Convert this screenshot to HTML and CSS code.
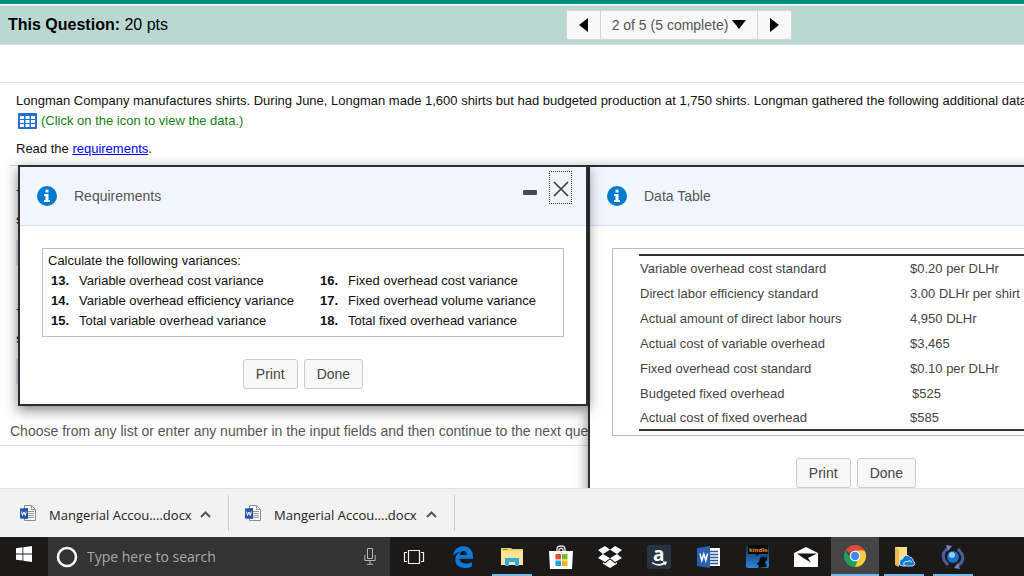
FILE: index.html
```
<!DOCTYPE html>
<html lang="en">
  <head>
    <meta charset="utf-8">
    <title>This Question</title>
    <link rel="stylesheet" href="styles.css">
  </head>
  <body>
    <main class="page">
      <header class="question-bar">
        <h1><strong>This Question:</strong> 20 pts</h1>
        <nav class="pager">
          <button aria-label="Previous question"><svg width="9" height="14" viewBox="0 0 9 14"><path d="M9 0v14L0 7z"/></svg></button>
          <button class="current">2 of 5 (5 complete) <svg width="14" height="9" viewBox="0 0 14 9"><path d="M0 0h14L7 9z"/></svg></button>
          <button aria-label="Next question"><svg width="9" height="14" viewBox="0 0 9 14"><path d="M0 0v14l9-7z"/></svg></button>
        </nav>
      </header>
      <section class="question">
        <p class="intro">Longman Company manufactures shirts. During June, Longman made 1,600 shirts but had budgeted production at 1,750 shirts. Longman gathered the following additional data:</p>
        <p class="view-data">
          <svg width="19" height="16" viewBox="0 0 19 16"><rect width="19" height="16" rx="1" fill="#1f6fd0"/><path fill="#fff" d="M2 3h4v3H2zM7.500 3h4v3h-4zM13 3h4v3h-4zM2 7h4v3H2zM7.500 7h4v3h-4zM13 7h4v3h-4zM2 11h4v3H2zM7.500 11h4v3h-4zM13 11h4v3h-4z"/></svg>
          (Click on the icon to view the data.)
        </p>
        <p class="read">Read the <a href="#requirements">requirements</a>.</p>
      </section>
      <section class="answers">
        <div class="answer"><p>-</p><p>s</p><div class="field"></div></div>
        <div class="answer"><p>-</p><p>s</p><div class="field"></div></div>
      </section>
      <p class="hint">Choose from any list or enter any number in the input fields and then continue to the next question.</p>

      <div class="dialogs">
        <section class="dialog front" id="requirements">
          <header>
            <svg class="info" width="20" height="20" viewBox="0 0 20 20"><circle cx="10" cy="10" r="10" fill="#0079d1"/><path fill="#fff" d="M8.500 3.500h3v3h-3zM7 8h4.500v6H13v2H7v-2h1.500v-4H7z"/></svg>
            <h2>Requirements</h2>
            <button class="minimize" aria-label="Minimize"><svg width="14" height="5" viewBox="0 0 14 5"><rect width="14" height="5" rx="1" fill="#4a4a4a"/></svg></button>
            <button class="close" aria-label="Close"><svg width="16" height="16" viewBox="0 0 16 16"><path d="M1 1l14 14M15 1L1 15" stroke="#3c3c3c" stroke-width="1.600"/></svg></button>
          </header>
          <div class="box variances">
            <p>Calculate the following variances:</p>
            <div class="lists">
              <ol start="13">
                <li><b>13.</b>Variable overhead cost variance</li>
                <li><b>14.</b>Variable overhead efficiency variance</li>
                <li><b>15.</b>Total variable overhead variance</li>
              </ol>
              <ol start="16">
                <li><b>16.</b>Fixed overhead cost variance</li>
                <li><b>17.</b>Fixed overhead volume variance</li>
                <li><b>18.</b>Total fixed overhead variance</li>
              </ol>
            </div>
          </div>
          <div class="actions"><button>Print</button><button>Done</button></div>
        </section>

        <section class="dialog" id="data-table">
          <header>
            <svg class="info" width="20" height="20" viewBox="0 0 20 20"><circle cx="10" cy="10" r="10" fill="#0079d1"/><path fill="#fff" d="M8.500 3.500h3v3h-3zM7 8h4.500v6H13v2H7v-2h1.500v-4H7z"/></svg>
            <h2>Data Table</h2>
          </header>
          <div class="box data">
            <table>
              <tr><td>Variable overhead cost standard</td><td>$0.20 per DLHr</td></tr>
              <tr><td>Direct labor efficiency standard</td><td>3.00 DLHr per shirt</td></tr>
              <tr><td>Actual amount of direct labor hours</td><td>4,950 DLHr</td></tr>
              <tr><td>Actual cost of variable overhead</td><td>$3,465</td></tr>
              <tr><td>Fixed overhead cost standard</td><td>$0.10 per DLHr</td></tr>
              <tr><td>Budgeted fixed overhead</td><td class="shift">$525</td></tr>
              <tr><td>Actual cost of fixed overhead</td><td>$585</td></tr>
            </table>
          </div>
          <div class="actions"><button>Print</button><button>Done</button></div>
        </section>
      </div>
    </main>

    <svg class="defs" width="0" height="0">
      <symbol id="docx" viewBox="0 0 17 17">
        <path d="M4.500.5h7l4 4v11h-11z" fill="#fafafa" stroke="#8c8c8c"/>
        <path d="M11.500.5v4h4M8 6.500h6M8 8.500h6M8 10.500h6M8 12.500h6" fill="none" stroke="#9a9a9a"/>
        <path d="M0 3.500L8 3v11l-8-.500z" fill="#2457a5"/>
        <path d="M1.500 6.500l1 4 1.400-3.500 1.400 3.500 1-4" fill="none" stroke="#fff"/>
      </symbol>
    </svg>
    <footer class="downloads">
      <div class="download">
        <svg width="17" height="17"><use href="#docx"/></svg>
        <span>Mangerial Accou....docx</span>
        <button aria-label="Download options"><svg width="11" height="7" viewBox="0 0 11 7"><path d="M1 6l4.500-4.500L10 6" fill="none" stroke="#555" stroke-width="2"/></svg></button>
      </div>
      <div class="download">
        <svg width="17" height="17"><use href="#docx"/></svg>
        <span>Mangerial Accou....docx</span>
        <button aria-label="Download options"><svg width="11" height="7" viewBox="0 0 11 7"><path d="M1 6l4.500-4.500L10 6" fill="none" stroke="#555" stroke-width="2"/></svg></button>
      </div>
    </footer>

    <footer class="taskbar">
      <button class="start" aria-label="Start"><svg width="16" height="16" viewBox="0 0 16 16"><path fill="#fff" d="M0 2.200L6.500 1.300v6.200H0zM7.300 1.200L16 0v7.500H7.300zM0 8.400h6.500v6.200L0 13.700zM7.300 8.400H16V16l-8.700-1.200z"/></svg></button>
      <div class="search">
        <svg width="22" height="22" viewBox="0 0 22 22"><circle cx="11" cy="11" r="9" fill="none" stroke="#f4f4f4" stroke-width="2.600"/></svg>
        <input type="text" placeholder="Type here to search" aria-label="Search">
        <svg width="12" height="17" viewBox="0 0 12 17"><path d="M3.500.5h5v10h-5zM.8 7v5.500h10.400V7M6 12.500V16M3 16.300h6" fill="none" stroke="#b5b5b5"/></svg>
      </div>
      <button class="app" aria-label="Task view"><svg width="22" height="16" viewBox="0 0 22 16"><path d="M5.500 1.500h11v13h-11zM4 3.500H1.500v9H4M18 3.500h2.500v9H18" fill="none" stroke="#f0f0f0" stroke-width="1.200"/></svg></button>
      <button class="app" aria-label="Edge"><svg width="20" height="22" viewBox="0 0 20 22"><path fill="#0b7ada" d="M0 9.500C.9 4 4.700.3 10.200.3 16.500.3 20 5 20 10.500v2.300H6.600c.2 3.400 3 4.900 6.300 4.900 2.200 0 4.200-.7 5.900-1.700v4.500c-2 1-4.400 1.500-7 1.500C6 22 2.300 18.600 2.300 13.800c0-3.600 1.800-6.300 5-8C4.400 6.200 1.800 7.600 0 9.500zM6.700 9h7.200c0-2.400-1.100-4-3.500-4-2.200 0-3.500 1.700-3.700 4z"/></svg></button>
      <button class="app open" aria-label="File Explorer"><svg width="22" height="18" viewBox="0 0 22 18"><path fill="#f3cf6c" d="M0 0h10l1 1h11v5H0z"/><path fill="#fbe39a" d="M0 3h22v14H0z"/><path fill="#35a9dc" d="M4 18v-8h14v8h-4v-4H8v4z"/><path fill="#4aa84a" d="M2 1h4v1H2z"/></svg></button>
      <button class="app" aria-label="Store"><svg width="24" height="24" viewBox="0 0 24 24"><path fill="none" stroke="#ddd" stroke-width="1.400" d="M8 7V4q0-3 4-3t4 3v3M10 7V4.500Q12 2 14 4.500V7"/><path fill="#fff" d="M0 6h24l-1 18H1z"/><path fill="#e8502e" d="M6.500 9H12v5.500H6.500z"/><path fill="#7dba1c" d="M13 9h5.500v5.500H13z"/><path fill="#18a0e0" d="M6.500 15.500H12V21H6.500z"/><path fill="#f9b512" d="M13 15.500h5.500V21H13z"/></svg></button>
      <button class="app" aria-label="Dropbox"><svg width="24" height="22" viewBox="0 0 24 22"><path fill="#fff" d="M7 0l5 3.700L5 8 0 4zM17 0l7 4-5 4-7-4.300zM0 12l5-4 7 4.300L7 16zM24 12l-5-4-7 4.300 5 3.700zM12 13.500l5 4 2-1.300v1.500L12 22l-7-4.300v-1.500l2 1.300z"/></svg></button>
      <button class="app" aria-label="Amazon"><svg width="24" height="24" viewBox="0 0 24 24"><rect width="24" height="24" rx="2" fill="#27333f"/><text x="6" y="16" class="amazon-a">a</text><path d="M5 17.500q6.500 4.500 13 .5M16 17l3 .3-1 2.700" fill="none" stroke="#fff" stroke-width="1.500"/></svg></button>
      <button class="app" aria-label="Word"><svg width="23" height="22" viewBox="0 0 23 22"><path fill="#fff" d="M12 2h11v18H12z"/><path d="M13 5.500h8M13 8.500h8M13 11.500h8M13 14.500h8M13 17.500h8" stroke="#2b579a" stroke-width="1.300"/><path fill="#2b60b0" d="M0 2l13-2v22L0 20z"/><path d="M3 7.500l1.800 7 2-6.500 2 6.500 1.800-7" fill="none" stroke="#fff" stroke-width="1.500"/></svg></button>
      <button class="app" aria-label="Kindle"><svg width="23" height="23" viewBox="0 0 23 23"><defs><linearGradient id="sky" x2="0" y2="1"><stop offset="0" stop-color="#0a2d56"/><stop offset="1" stop-color="#2c86d8"/></linearGradient></defs><rect width="23" height="23" rx="2" fill="url(#sky)"/><path fill="#0b0b0d" d="M2 0h20v9h-9l-2 2-1-2H2zM14 13l3-2 2 2 2-2v4l-2 2 2 5-9 1 1-3-3-1 3-2z"/><text x="3" y="7" class="kindle-name">kindle</text></svg></button>
      <button class="app" aria-label="Mail"><svg width="24" height="20" viewBox="0 0 24 20"><path fill="#fff" d="M0 6L12 0l12 6v14H0z"/><path fill="#141414" d="M3 6.500h20l-9 4.500 3 4.500L10 11.500z"/></svg></button>
      <button class="app open active" aria-label="Chrome"><svg width="22" height="22" viewBox="0 0 22 22"><path fill="#de4a3c" d="M11 11L1.470 5.500A11 11 0 0 1 20.530 5.500z"/><path fill="#fccd3f" d="M11 11V5.500h9.530A11 11 0 0 1 11 22z"/><path fill="#1ca15f" d="M1.470 5.500L6.500 13.500 11 16l2.500-.2L11 22A11 11 0 0 1 1.470 5.500z"/><circle cx="11" cy="11" r="5.300" fill="#fff"/><circle cx="11" cy="11" r="4.200" fill="#4285f4"/></svg></button>
      <button class="app open" aria-label="OneDrive folder"><svg width="21" height="20" viewBox="0 0 21 20"><path fill="#fbe08c" d="M1 0h12v18H1z"/><path fill="#e6bb56" d="M1 0l4 3v17l-4-2z"/><path fill="#0a78d4" stroke="#fff" stroke-width=".8" d="M9 19a3.500 3.500 0 0 1-.5-7 4 4 0 0 1 7.500-1.500 3 3 0 0 1 3 3.500 2.600 2.600 0 0 1-.5 5z"/><path d="M10.500 18.500c-2-3 1-5 3-3.500 1-2 4-1.500 4 .5" fill="none" stroke="#fff"/></svg></button>
      <button class="app open" aria-label="Sync"><svg width="24" height="24" viewBox="0 0 24 24"><circle cx="12" cy="12" r="6" fill="#1b6fc4"/><circle cx="11" cy="10" r="3" fill="#8fd0fa"/><path d="M8 3Q0 7 3 15l4 5M16 21q8-4 5-12l-4-5" fill="none" stroke="#4a5d9c" stroke-width="3"/><path fill="#7484bc" d="M5 0l6 1-4 5zM19 24l-6-1 4-5z"/></svg></button>
    </footer>
  </body>
</html>
```
FILE: styles.css
```
* {
  box-sizing: border-box;
}
html, body {
  height: 100%;
  margin: 0;
}
body {
  display: flex;
  flex-direction: column;
  overflow: hidden;
  background: #fff;
  color: #111;
  font: 13px/20px "Liberation Sans", Arial, sans-serif;
}
p, h1, h2, ol {
  margin: 0;
  padding: 0;
}
button {
  font: inherit;
  padding: 0;
  border: 0;
  background: none;
  cursor: pointer;
}
svg {
  flex: none;
  overflow: visible;
}
.defs {
  position: absolute;
}

.page {
  position: relative;
  flex: 1;
  min-height: 0;
  overflow: hidden;
  border-top: 4px solid #009080;
}
.question-bar {
  display: flex;
  align-items: center;
  height: 40px;
  margin-top: 1px;
  padding: 0 8px 1px;
  border-top: 1px solid #e4e8ee;
  border-bottom: 1px solid #d5dbe0;
  background: #b9d8d2;
}
.question-bar h1 {
  width: 558px;
  font-size: 16px;
  font-weight: normal;
  color: #000;
}
.pager {
  display: flex;
  border: 1px solid #d4d4d4;
  border-radius: 2px;
  background: #f8f8f8;
}
.pager button {
  display: flex;
  align-items: center;
  justify-content: center;
  gap: 4px;
  width: 33px;
  height: 28px;
}
.pager .current {
  width: 158px;
  border: 1px solid #d4d4d4;
  border-width: 0 1px;
  color: #555;
  font-size: 14px;
}

.question {
  margin-top: 37px;
  padding: 8px 16px 6px;
  border-top: 1px solid #dde2ea;
}
.intro {
  white-space: nowrap;
}
.view-data {
  display: flex;
  align-items: center;
  gap: 4px;
  padding-left: 2px;
  color: #128012;
}
.read {
  margin-top: 8px;
}
.read a {
  color: #00f;
}
.answers {
  height: 252px;
  margin-left: 10px;
  padding: 14px 6px;
  border-top: 1px solid #cdd5e3;
}
.answer {
  height: 119px;
}
.answer p {
  height: 30px;
}
.field {
  width: 80px;
  height: 25px;
  background: #dfe3ea;
}
.hint {
  padding: 4px 10px;
  border-bottom: 1px solid #d5dbe6;
  color: #555;
  font-size: 14px;
  white-space: nowrap;
}

.dialogs {
  position: absolute;
  top: 161px;
  left: 18px;
  display: flex;
  align-items: flex-start;
}
.dialog {
  flex: none;
  width: 536px;
  min-height: 340px;
  border: 2px solid #2b2f30;
  background: #fff;
  box-shadow: 0 4px 12px rgba(0, 0, 0, 0.5);
}
.dialog.front {
  position: relative;
  z-index: 1;
  width: 570px;
  min-height: 0;
}
.dialog header {
  display: flex;
  align-items: center;
  height: 59px;
  padding: 0 14px 0 17px;
  border-bottom: 1px solid #cfe2f6;
  background: #f1f6fe;
}
.dialog h2 {
  flex: 1;
  margin-left: 17px;
  color: #555;
  font-size: 14px;
  font-weight: normal;
}
.minimize {
  display: flex;
  margin: 0 12px 8px 0;
}
.close {
  display: flex;
  align-items: center;
  justify-content: center;
  width: 23px;
  height: 33px;
  margin-bottom: 18px;
  padding-top: 3px;
  border: 1px dotted #333;
}
.box {
  margin: 22px;
  border: 1px solid #bfbfbf;
}
.variances {
  height: 89px;
  padding: 2px 5px;
}
.lists {
  display: flex;
}
.lists ol {
  flex: none;
  width: 269px;
  list-style: none;
}
.lists ol:last-child {
  flex: 1;
}
.lists b {
  display: inline-block;
  width: 28px;
}
.lists li {
  padding-left: 3px;
}
.actions {
  display: flex;
  justify-content: center;
  gap: 6px;
  padding-bottom: 15px;
}
.actions button {
  height: 30px;
  padding: 0 12px;
  border: 1px solid #ccc;
  border-radius: 3px;
  background: #f8f8f8;
  color: #444;
  font-size: 14px;
}
.data {
  padding: 5px 26px 4px;
}
.data table {
  width: 100%;
  border-collapse: collapse;
  border: 2px solid #333;
  border-width: 2px 0;
  color: #444;
}
.data td {
  height: 25px;
  padding: 3px 1px 1px;
}
.data td:first-child {
  width: 270px;
}
.data .shift {
  padding-left: 3px;
}

.downloads {
  display: flex;
  flex: none;
  height: 49px;
  padding: 6px 0;
  border-top: 1px solid #ddd;
  background: #f2f2f2;
  font: 13px/20px "Open Sans", "Noto Sans", sans-serif;
}
.download {
  display: flex;
  align-items: center;
  width: 226px;
  padding: 0 17px 0 16px;
  border-right: 1px solid #ccc;
}
.download:first-child {
  width: 229px;
  padding-left: 20px;
}
.download span {
  flex: 1;
  margin-left: 12px;
  padding-top: 4px;
  color: #222;
}

.taskbar {
  display: flex;
  flex: none;
  height: 39px;
  background: #1b1a18;
  color: #fff;
}
.start {
  width: 48px;
}
.search {
  display: flex;
  align-items: center;
  width: 342px;
  padding: 0 14px 0 8px;
  background: #333;
}
.search input {
  flex: 1;
  min-width: 0;
  height: 30px;
  padding: 0 9px;
  border: 0;
  background: none;
  color: #fff;
  font: 14px/20px "Open Sans", "Noto Sans", sans-serif;
}
.search input::placeholder {
  color: #a8a8a8;
}
.app {
  display: flex;
  align-items: center;
  justify-content: center;
  width: 48px;
  margin-right: 1px;
}
.app.open {
  background: linear-gradient(#76b9ed, #76b9ed) center bottom / 40px 2px no-repeat;
}
.app.active {
  border-bottom: 2px solid #76b9ed;
  background: #454545;
}
.amazon-a {
  fill: #fff;
  font: bold 19px "Open Sans", sans-serif;
}
.kindle-name {
  fill: #f08a1d;
  font: bold 6px "Open Sans", sans-serif;
}
```
